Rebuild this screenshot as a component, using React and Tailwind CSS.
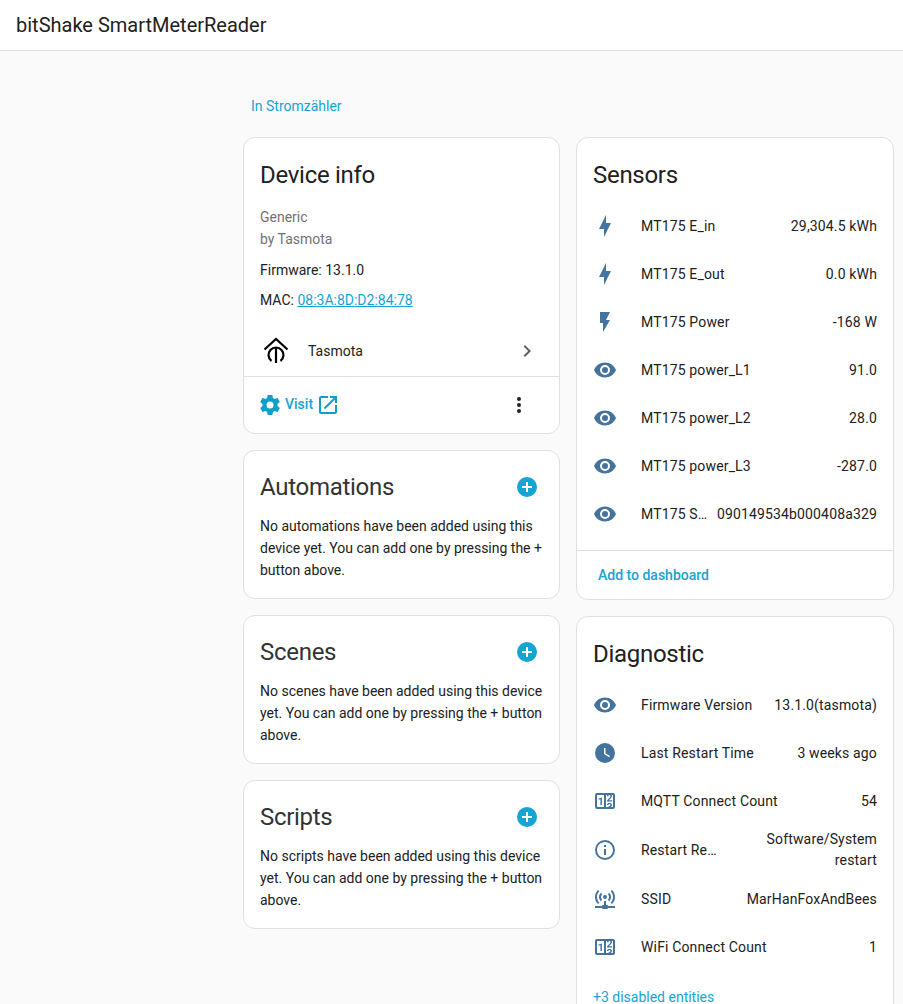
const bolt = "M11 15H6L13 1V9H18L11 23V15Z";
const flash = "M7,2V13H10V22L17,10H13L17,2H7Z";
const eye = "M12,9A3,3 0 0,0 9,12A3,3 0 0,0 12,15A3,3 0 0,0 15,12A3,3 0 0,0 12,9M12,17A5,5 0 0,1 7,12A5,5 0 0,1 12,7A5,5 0 0,1 17,12A5,5 0 0,1 12,17M12,4.5C7,4.5 2.73,7.61 1,12C2.73,16.39 7,19.5 12,19.5C17,19.5 21.27,16.39 23,12C21.27,7.61 17,4.5 12,4.5Z";
const clock = "M12,2A10,10 0 0,0 2,12A10,10 0 0,0 12,22A10,10 0 0,0 22,12A10,10 0 0,0 12,2M16.2,16.2L11,13V7H12.5V12.2L17,14.9L16.2,16.2Z";
const counter = "M4,4H20A2,2 0 0,1 22,6V18A2,2 0 0,1 20,20H4A2,2 0 0,1 2,18V6A2,2 0 0,1 4,4M4,6V18H11V6H4M20,18V6H18.76C19,6.54 18.95,7.07 18.95,7.13C18.88,7.8 18.41,8.5 18.24,8.75L15.91,11.3L19.23,11.28L19.24,12.5L14.04,12.47L14,11.47C14,11.47 17.05,8.24 17.2,7.95C17.34,7.67 17.91,6 16.5,6C15.27,6.05 15.41,7.3 15.41,7.3L13.87,7.31C13.87,7.31 13.88,6.65 14.25,6H13V18H15.58L15.57,17.14L16.54,17.13C16.54,17.13 17.45,16.97 17.46,16.08C17.5,15.08 16.65,15.08 16.5,15.08C16.37,15.08 15.43,15.13 15.43,15.95H13.91C13.91,15.95 13.95,13.89 16.5,13.89C19.1,13.89 18.96,15.91 18.96,15.91C18.96,15.91 19,17.16 17.85,17.63L18.37,18H20M8.92,16H7.42V10.2L5.62,10.76V9.53L8.76,8.41H8.92V16Z";
const info = "M11,9H13V7H11M12,20C7.59,20 4,16.41 4,12C4,7.59 7.59,4 12,4C16.41,4 20,7.59 20,12C20,16.41 16.41,20 12,20M12,2A10,10 0 0,0 2,12A10,10 0 0,0 12,22A10,10 0 0,0 22,12A10,10 0 0,0 12,2M11,17H13V11H11V17Z";
const network = "M4.93,2.93C3.12,4.74 2,7.24 2,10C2,12.76 3.12,15.26 4.93,17.07L6.34,15.66C4.89,14.22 4,12.22 4,10C4,7.79 4.89,5.78 6.34,4.34L4.93,2.93M19.07,2.93L17.66,4.34C19.11,5.78 20,7.79 20,10C20,12.22 19.11,14.22 17.66,15.66L19.07,17.07C20.88,15.26 22,12.76 22,10C22,7.24 20.88,4.74 19.07,2.93M7.76,5.76C6.67,6.85 6,8.35 6,10C6,11.65 6.67,13.15 7.76,14.24L9.17,12.83C8.45,12.11 8,11.11 8,10C8,8.89 8.45,7.89 9.17,7.17L7.76,5.76M16.24,5.76L14.83,7.17C15.55,7.89 16,8.89 16,10C16,11.11 15.55,12.11 14.83,12.83L16.24,14.24C17.33,13.15 18,11.65 18,10C18,8.35 17.33,6.85 16.24,5.76M12,8A2,2 0 0,0 10,10A2,2 0 0,0 12,12A2,2 0 0,0 14,10A2,2 0 0,0 12,8M11,14V18H10A1,1 0 0,0 9,19H2V21H9A1,1 0 0,0 10,22H14A1,1 0 0,0 15,21H22V19H15A1,1 0 0,0 14,18H13V14H11Z";
const cog = "M12,15.5A3.5,3.5 0 0,1 8.5,12A3.5,3.5 0 0,1 12,8.5A3.5,3.5 0 0,1 15.5,12A3.5,3.5 0 0,1 12,15.5M19.43,12.97C19.47,12.65 19.5,12.33 19.5,12C19.5,11.67 19.47,11.34 19.43,11L21.54,9.37C21.73,9.22 21.78,8.95 21.66,8.73L19.66,5.27C19.54,5.05 19.27,4.96 19.05,5.05L16.56,6.05C16.04,5.66 15.5,5.32 14.87,5.07L14.5,2.42C14.46,2.18 14.25,2 14,2H10C9.75,2 9.54,2.18 9.5,2.42L9.13,5.07C8.5,5.32 7.96,5.66 7.44,6.05L4.95,5.05C4.73,4.96 4.46,5.05 4.34,5.27L2.34,8.73C2.21,8.95 2.27,9.22 2.46,9.37L4.57,11C4.53,11.34 4.5,11.67 4.5,12C4.5,12.33 4.53,12.65 4.57,12.97L2.46,14.63C2.27,14.78 2.21,15.05 2.34,15.27L4.34,18.73C4.46,18.95 4.73,19.03 4.95,18.95L7.44,17.94C7.96,18.34 8.5,18.68 9.13,18.93L9.5,21.58C9.54,21.82 9.75,22 10,22H14C14.25,22 14.46,21.82 14.5,21.58L14.87,18.93C15.5,18.67 16.04,18.34 16.56,17.94L19.05,18.95C19.27,19.03 19.54,18.95 19.66,18.73L21.66,15.27C21.78,15.05 21.73,14.78 21.54,14.63L19.43,12.97Z";
const openNew = "M14,3V5H17.59L7.76,14.83L9.17,16.24L19,6.41V10H21V3M19,19H5V5H12V3H5C3.89,3 3,3.9 3,5V19A2,2 0 0,0 5,21H19A2,2 0 0,0 21,19V12H19V19Z";
const plusCircle = "M17,13H13V17H11V13H7V11H11V7H13V11H17M12,2A10,10 0 0,0 2,12A10,10 0 0,0 12,22A10,10 0 0,0 22,12A10,10 0 0,0 12,2Z";
const dots = "M12,16A2,2 0 0,1 14,18A2,2 0 0,1 12,20A2,2 0 0,1 10,18A2,2 0 0,1 12,16M12,10A2,2 0 0,1 14,12A2,2 0 0,1 12,14A2,2 0 0,1 10,12A2,2 0 0,1 12,10M12,4A2,2 0 0,1 14,6A2,2 0 0,1 12,8A2,2 0 0,1 10,6A2,2 0 0,1 12,4Z";
const chevron = "M8.59,16.58L13.17,12L8.59,7.41L10,6L16,12L10,18L8.59,16.58Z";

const Icon = ({ d, className }) => (
  <svg viewBox="0 0 24 24" className={className} fill="currentColor">
    <path d={d} />
  </svg>
);

const sensors = [
  [bolt, "MT175 E_in", "29,304.5 kWh"],
  [bolt, "MT175 E_out", "0.0 kWh"],
  [flash, "MT175 Power", "-168 W"],
  [eye, "MT175 power_L1", "91.0"],
  [eye, "MT175 power_L2", "28.0"],
  [eye, "MT175 power_L3", "-287.0"],
  [eye, "MT175 Server ID", "090149534b000408a329"],
];

const diagnostics = [
  [eye, "Firmware Version", "13.1.0(tasmota)"],
  [clock, "Last Restart Time", "3 weeks ago"],
  [counter, "MQTT Connect Count", "54"],
  [info, "Restart Reason", "Software/System restart"],
  [network, "SSID", "MarHanFoxAndBees"],
  [counter, "WiFi Connect Count", "1"],
];

const EntityRow = ({ row }) => (
  <div className="flex min-h-12 items-center px-4 py-1 tracking-[0.15px]">
    <Icon d={row[0]} className="h-6 w-6 shrink-0 text-[#44739e]" />
    <div className="ml-6 min-w-0 flex-1 truncate text-sm text-[#212121]">{row[1]}</div>
    <div className="ml-1.5 max-w-[150px] min-w-min shrink-0 text-right text-sm leading-[21px] text-[#212121]">{row[2]}</div>
  </div>
);

const Card = ({ children, className = "" }) => (
  <div className={`rounded-xl border border-[#e0e0e0] bg-white ${className}`}>{children}</div>
);

const EmptyCard = ({ title, text }) => (
  <Card className="h-[149px] px-4 pt-5">
    <div className="flex items-center justify-between">
      <h2 className="text-2xl leading-8 tracking-[-0.29px] text-[#333333]">{title}</h2>
      <Icon d={plusCircle} className="mr-1 h-6 w-6 text-[#16a5d2]" />
    </div>
    <p className="mt-[11.5px] text-sm leading-[22.4px] text-[#212121]">{text}</p>
  </Card>
);

export default function App() {
  return (
    <div className="h-screen overflow-hidden bg-[#fafafa] font-['Roboto',sans-serif]">
      <header className="flex h-[51px] items-center border-b border-[#e0e0e0] bg-white px-4">
        <h1 className="text-xl text-[#212121]">bitShake SmartMeterReader</h1>
      </header>
      <main className="pl-[243px] pr-[9px]">
        <div className="flex h-[86px] items-end px-2 pb-[21px]">
          <a className="text-sm text-[#16a5d2]">In Stromzähler</a>
        </div>
        <div className="flex items-start gap-4">
          <div className="flex w-[317px] shrink-0 flex-col gap-4">
            <Card>
              <div className="px-4 pt-[21px]">
                <h2 className="text-2xl leading-8 tracking-[-0.29px] text-[#212121]">Device info</h2>
                <div className="mt-[15px] text-sm leading-[22px] text-[#727272]">
                  <div>Generic</div>
                  <div>by Tasmota</div>
                </div>
                <div className="mt-[9px] text-sm leading-[22px] text-[#212121]">Firmware: 13.1.0</div>
                <div className="mt-2 text-sm leading-[22px] text-[#212121]">
                  MAC: <a className="text-[#16a5d2] underline">08:3A:8D:D2:84:78</a>
                </div>
              </div>
              <div className="mt-[15px] flex h-[51px] items-center border-b border-[#e0e0e0] pl-4 pr-5">
                <svg viewBox="0 0 32 32" className="h-8 w-8 shrink-0" fill="none" stroke="#000">
                  <path d="M4.5 14.5L16 4L27.5 14.5" strokeWidth="2.2" />
                  <path d="M11.5 26A7.5 7.5 0 1 1 20.5 26" strokeWidth="2.2" />
                  <path d="M16 12V28" strokeWidth="2.2" />
                </svg>
                <div className="ml-4 flex-1 text-sm text-[#212121]">Tasmota</div>
                <Icon d={chevron} className="h-6 w-6 text-[#616161]" />
              </div>
              <div className="flex h-14 items-center pl-[14px] pr-7">
                <Icon d={cog} className="h-6 w-6 text-[#0d9fcb]" />
                <span className="-mt-0.5 ml-[3px] text-sm font-medium text-[#16a5d2]">Visit</span>
                <Icon d={openNew} className="ml-[3px] h-6 w-6 text-[#0d9fcb]" />
                <Icon d={dots} className="ml-auto h-6 w-6 text-[#212121]" />
              </div>
            </Card>
            <EmptyCard title="Automations" text="No automations have been added using this device yet. You can add one by pressing the + button above." />
            <EmptyCard title="Scenes" text="No scenes have been added using this device yet. You can add one by pressing the + button above." />
            <EmptyCard title="Scripts" text="No scripts have been added using this device yet. You can add one by pressing the + button above." />
          </div>
          <div className="flex w-[318px] shrink-0 flex-col gap-4">
            <Card>
              <h2 className="px-4 pt-[21px] text-2xl leading-8 tracking-[-0.29px] text-[#212121]">Sensors</h2>
              <div className="mt-[11px] pb-3">
                {sensors.map((row) => <EntityRow key={row[1]} row={row} />)}
              </div>
              <div className="flex h-[49px] items-center border-t border-[#e0e0e0] px-[21px] text-sm font-medium text-[#16a5d2]">
                Add to dashboard
              </div>
            </Card>
            <Card>
              <h2 className="px-4 pt-[21px] text-2xl leading-8 tracking-[-0.29px] text-[#212121]">Diagnostic</h2>
              <div className="mt-[11px]">
                {diagnostics.map((row) => <EntityRow key={row[1]} row={row} />)}
              </div>
              <div className="px-4 pt-4 pb-4 text-sm text-[#16a5d2]">+3 disabled entities</div>
            </Card>
          </div>
        </div>
      </main>
    </div>
  );
}
